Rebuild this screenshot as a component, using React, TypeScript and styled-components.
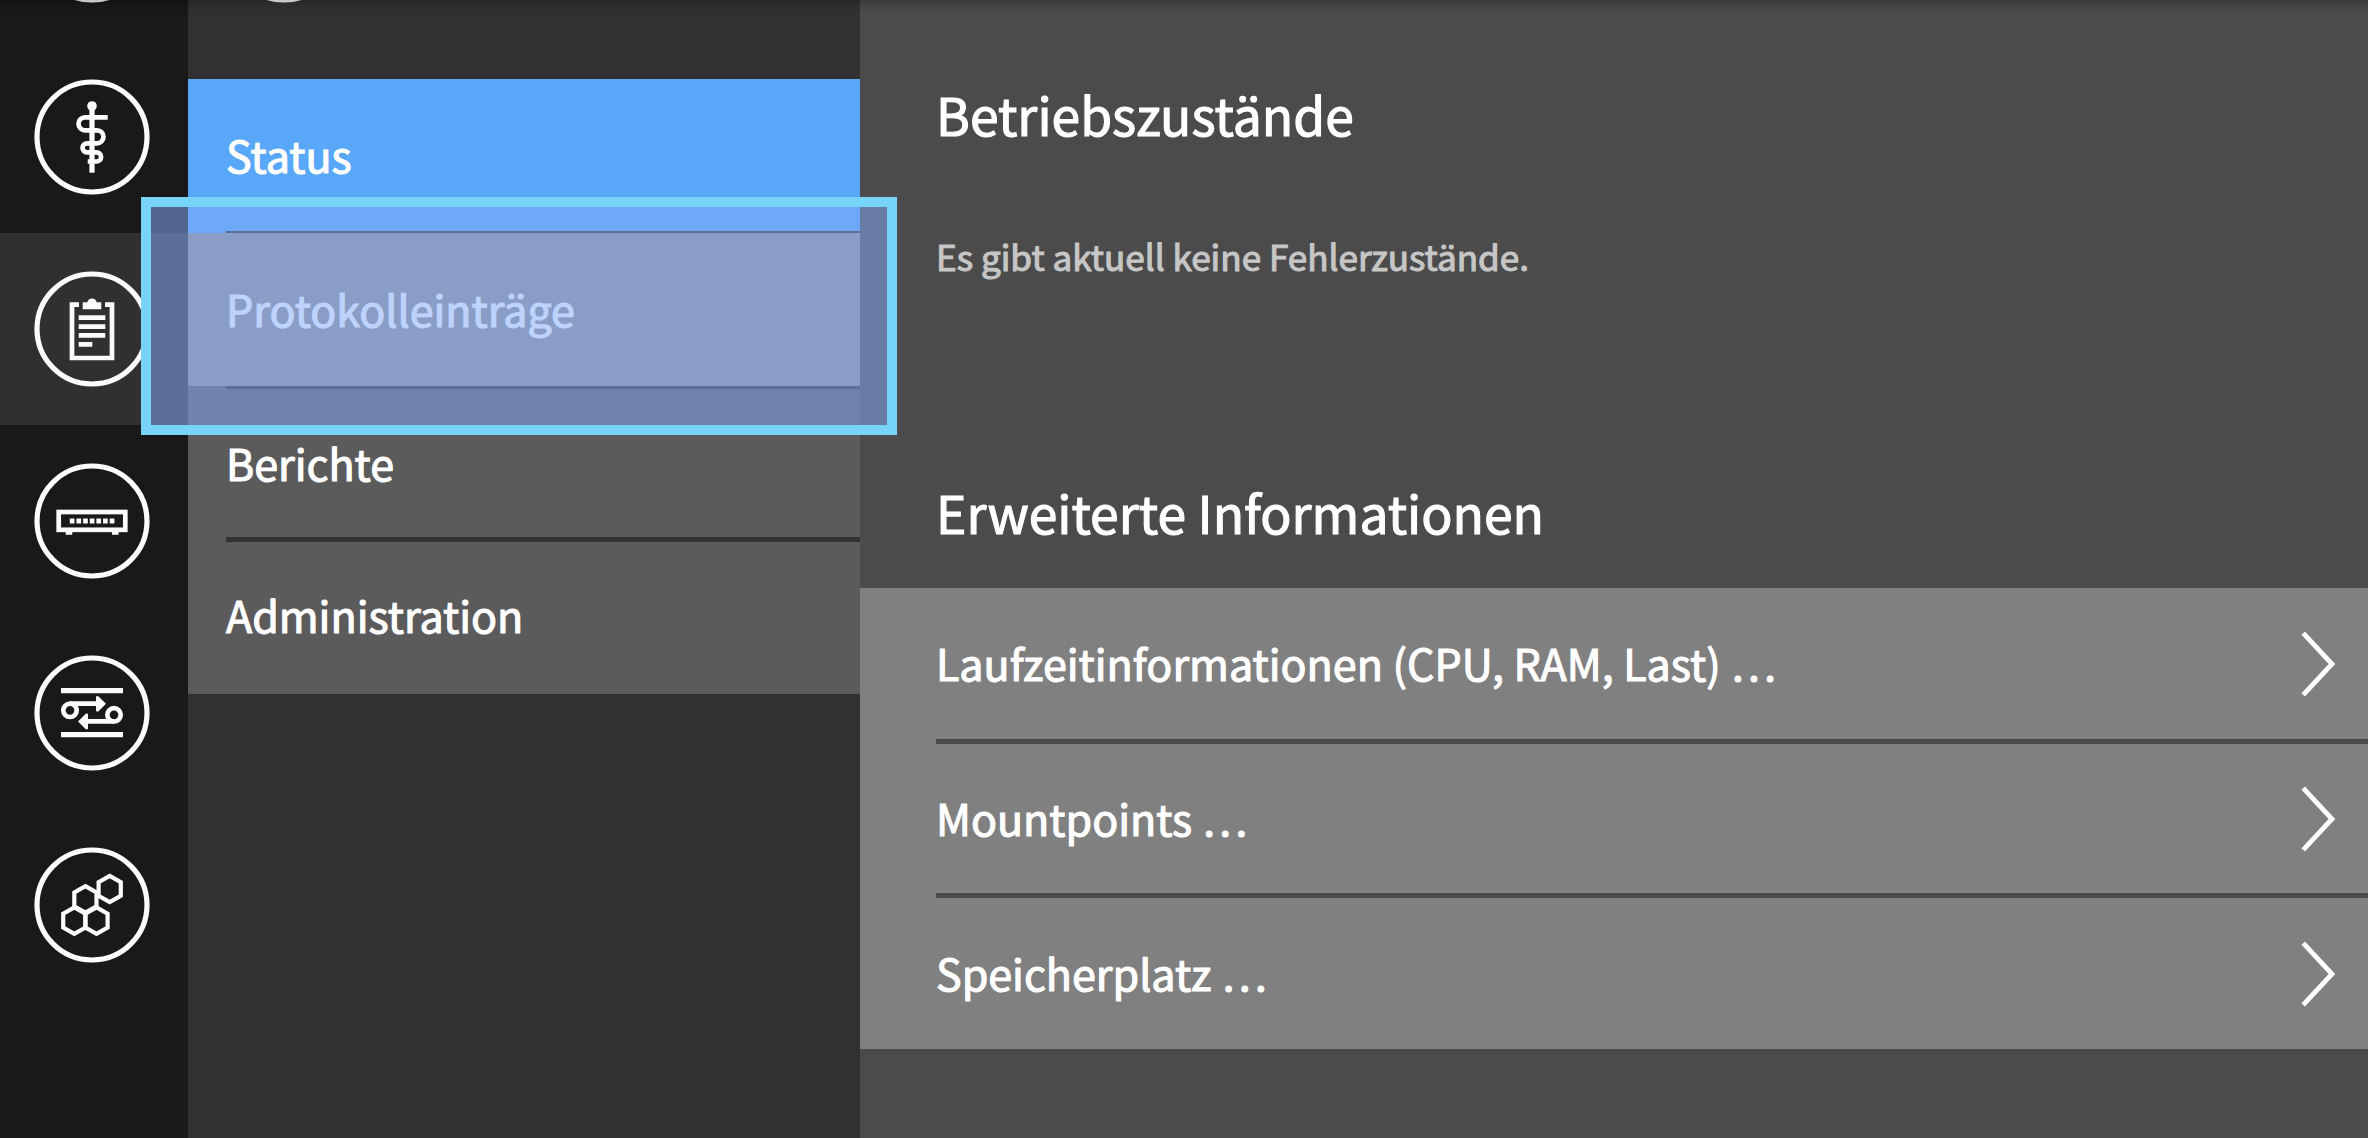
import React from "react";
import styled, { createGlobalStyle } from "styled-components";

const GlobalStyle = createGlobalStyle`
  *, *::before, *::after { box-sizing: border-box; }
  html, body { margin: 0; padding: 0; background: #4b4b4b; }
  body { overflow: hidden; }
`;

const Screen = styled.div`
  position: relative;
  display: grid;
  grid-template-columns: 188px 672px 1fr;
  width: 100vw;
  height: 100vh;
  min-height: 1138px;
  overflow: hidden;
  color: #fff;
  font-family: "Noto Sans CJK SC", "Noto Sans", sans-serif;
  font-weight: 400;
  -webkit-text-stroke: 1.1px currentColor;
`;

const HeaderShadow = styled.div`
  position: absolute;
  inset: 0 0 auto 0;
  height: 14px;
  background: linear-gradient(rgba(0, 0, 0, 0.22), rgba(0, 0, 0, 0.07) 50%, rgba(0, 0, 0, 0));
  pointer-events: none;
`;

const Rail = styled.nav`
  display: flex;
  flex-direction: column;
  height: 100vh;
  overflow: hidden;
  background: #191919;
`;

const RailItem = styled.a<{ $active?: boolean; $clipped?: boolean }>`
  display: flex;
  flex: none;
  align-items: center;
  height: 192px;
  margin-top: ${(p) => (p.$clipped ? "-151px" : "0")};
  padding-left: 34px;
  background: ${(p) => (p.$active ? "#303030" : "transparent")};
`;

const RoundIcon = styled.svg`
  display: block;
  flex: none;
  width: 116px;
  height: 116px;
  fill: none;
  stroke: #fbfbfb;
  stroke-width: 4.7;
`;

const MenuColumn = styled.aside`
  height: 100vh;
  background: #313131;
`;

const MenuHeader = styled.div`
  height: 79px;
  padding-left: 38px;
  overflow: hidden;

  ${RoundIcon} {
    margin-top: -113px;
  }
`;

const MenuList = styled.ul`
  margin: 0;
  padding: 0;
  list-style: none;
  background: #5b5b5b;
`;

const MenuItem = styled.li<{ $tone?: string; $height: number; $line?: number; $lineColor?: string }>`
  display: flex;
  flex-direction: column;
  height: ${(p) => p.$height}px;
  padding-left: 38px;
  background: ${(p) => p.$tone ?? "transparent"};

  &::after {
    content: "";
    height: ${(p) => p.$line ?? 0}px;
    margin-top: auto;
    background: ${(p) => p.$lineColor ?? "#313131"};
  }
`;

const MenuLabel = styled.span<{ $offset: number }>`
  padding-top: ${(p) => p.$offset}px;
  font-size: 43px;
  line-height: 60px;
  white-space: nowrap;
`;

const Main = styled.main`
  display: flex;
  flex-direction: column;
  height: 100vh;
  background: #4b4b4b;
`;

const StatusSection = styled.section`
  height: 399px;
  padding: 77px 0 0 76px;
`;

const Heading = styled.h2`
  margin: 0;
  font-size: 51.6px;
  font-weight: 400;
  line-height: 74px;
  white-space: nowrap;
`;

const Note = styled.p`
  margin: 80px 0 0;
  color: #c6c6c6;
  font-size: 35.1px;
  line-height: 50px;
  white-space: nowrap;
`;

const InfoHeader = styled.header`
  height: 189px;
  padding: 76px 0 0 76px;
`;

const InfoList = styled.ul`
  display: flex;
  flex-direction: column;
  margin: 0;
  padding: 0 0 0 76px;
  list-style: none;
  background: #808080;
`;

const InfoRow = styled.li<{ $height: number }>`
  display: flex;
  align-items: center;
  justify-content: space-between;
  box-sizing: content-box;
  height: ${(p) => p.$height}px;
  padding-right: 31px;
  font-size: 43px;
  line-height: 60px;
  white-space: nowrap;

  &:not(:last-child) {
    border-bottom: 5px solid #4b4b4b;
  }
`;

const InfoLabel = styled.span`
  margin-top: -4px;
`;

const Chevron = styled.svg`
  width: 36px;
  height: 68px;
  fill: none;
  stroke: #fff;
  stroke-width: 4.8;
`;

const Highlight = styled.div`
  position: absolute;
  top: 197px;
  left: 141px;
  width: 756px;
  height: 238px;
  border: 10px solid #78d3f9;
  background: rgba(131, 169, 250, 0.52);
  background-clip: padding-box;
`;

function Ring({ children }: { children?: React.ReactNode }) {
  return (
    <RoundIcon viewBox="-58 -58 116 116">
      <circle r="55" strokeWidth="5.2" />
      {children}
    </RoundIcon>
  );
}

function StaffIcon() {
  return (
    <Ring>
      <circle cy="-31" r="4.8" fill="#fbfbfb" stroke="none" />
      <path d="M0-31V35.7" strokeWidth="5.2" />
      <path d="M15.7-19.7H-7a6.5 6.5 0 0 0 0 13H5a6.5 6.5 0 0 1 0 13H-5a4.5 4.5 0 0 0 0 9H4.5a4.6 4.6 0 0 1 0 9.2H-4.3" />
    </Ring>
  );
}

function ClipboardIcon() {
  return (
    <Ring>
      <path d="M-13-24.3H-20V29H20V-24.3H13" />
      <path d="M-9.3-19.7V-26.7H-4.6A4.7 4.7 0 0 1 4.6-26.7H9.3V-19.7Z" fill="#fbfbfb" stroke="none" />
      <path d="M-13.3-11.3H13.3M-13.3-2.3H13.3M-13.3 6.4H13.3M-13.3 15.3H.3" />
    </Ring>
  );
}

function DeviceIcon() {
  return (
    <Ring>
      <rect x="-33.3" y="-9" width="66.6" height="17.8" />
      <path d="M-26.3 12.3h6.6M20 12.3h6.6" strokeWidth="3" />
      <path d="M-22.2 0H23" strokeWidth="4.8" strokeDasharray="4.7 1.95" />
    </Ring>
  );
}

function TransferIcon() {
  return (
    <Ring>
      <path d="M-31-22.3H31M-31 21.7H31" strokeWidth="5.2" />
      <circle cx="-22" cy="-2.7" r="6.7" />
      <circle cx="22" cy="1.8" r="6.7" />
      <path d="M-22-9.3H7M22 8.4H-7" />
      <path
        d="M4-16.5 6-17 14-9.3 6-1.3 4-2ZM-4 .8-6 .5-14 8.4-6 16.4-4 16Z"
        fill="#fbfbfb"
        stroke="none"
      />
    </Ring>
  );
}

const HEXAGON_CENTERS = [
  [-17.7, 15.6],
  [4.5, 15.6],
  [-6.6, -5.6],
  [17.7, -16],
];

function CellsIcon() {
  return (
    <Ring>
      {HEXAGON_CENTERS.map(([x, y]) => (
        <path
          key={`${x}:${y}`}
          transform={`translate(${x} ${y})`}
          d="M0-13.2 11.1-6.9V6.9L0 13.2-11.1 6.9V-6.9Z"
          strokeWidth="4.2"
        />
      ))}
    </Ring>
  );
}

const INFO_ROWS = [
  { label: "Laufzeitinformationen (CPU, RAM, Last) …", height: 151 },
  { label: "Mountpoints …", height: 149 },
  { label: "Speicherplatz …", height: 151 },
];

export default function App() {
  return (
    <>
      <GlobalStyle />
      <Screen>
        <Rail>
          <RailItem $clipped>
            <Ring />
          </RailItem>
          <RailItem>
            <StaffIcon />
          </RailItem>
          <RailItem $active>
            <ClipboardIcon />
          </RailItem>
          <RailItem>
            <DeviceIcon />
          </RailItem>
          <RailItem>
            <TransferIcon />
          </RailItem>
          <RailItem>
            <CellsIcon />
          </RailItem>
        </Rail>

        <MenuColumn>
          <MenuHeader>
            <Ring />
          </MenuHeader>
          <MenuList>
            <MenuItem $tone="#59a7f8" $height={154} $line={2}>
              <MenuLabel $offset={45}>Status</MenuLabel>
            </MenuItem>
            <MenuItem $tone="#919191" $height={153}>
              <MenuLabel $offset={45}>Protokolleinträge</MenuLabel>
            </MenuItem>
            <MenuItem $height={3} $line={3} />
            <MenuItem $height={153} $line={5}>
              <MenuLabel $offset={43}>Berichte</MenuLabel>
            </MenuItem>
            <MenuItem $height={152}>
              <MenuLabel $offset={42}>Administration</MenuLabel>
            </MenuItem>
          </MenuList>
        </MenuColumn>

        <Main>
          <StatusSection>
            <Heading>Betriebszustände</Heading>
            <Note>Es gibt aktuell keine Fehlerzustände.</Note>
          </StatusSection>
          <InfoHeader>
            <Heading>Erweiterte Informationen</Heading>
          </InfoHeader>
          <InfoList>
            {INFO_ROWS.map((row) => (
              <InfoRow key={row.label} $height={row.height}>
                <InfoLabel>{row.label}</InfoLabel>
                <Chevron viewBox="0 0 36 68">
                  <path d="M2.2 3.2 31 34 2.2 64.8" />
                </Chevron>
              </InfoRow>
            ))}
          </InfoList>
        </Main>

        <HeaderShadow />
        <Highlight />
      </Screen>
    </>
  );
}
